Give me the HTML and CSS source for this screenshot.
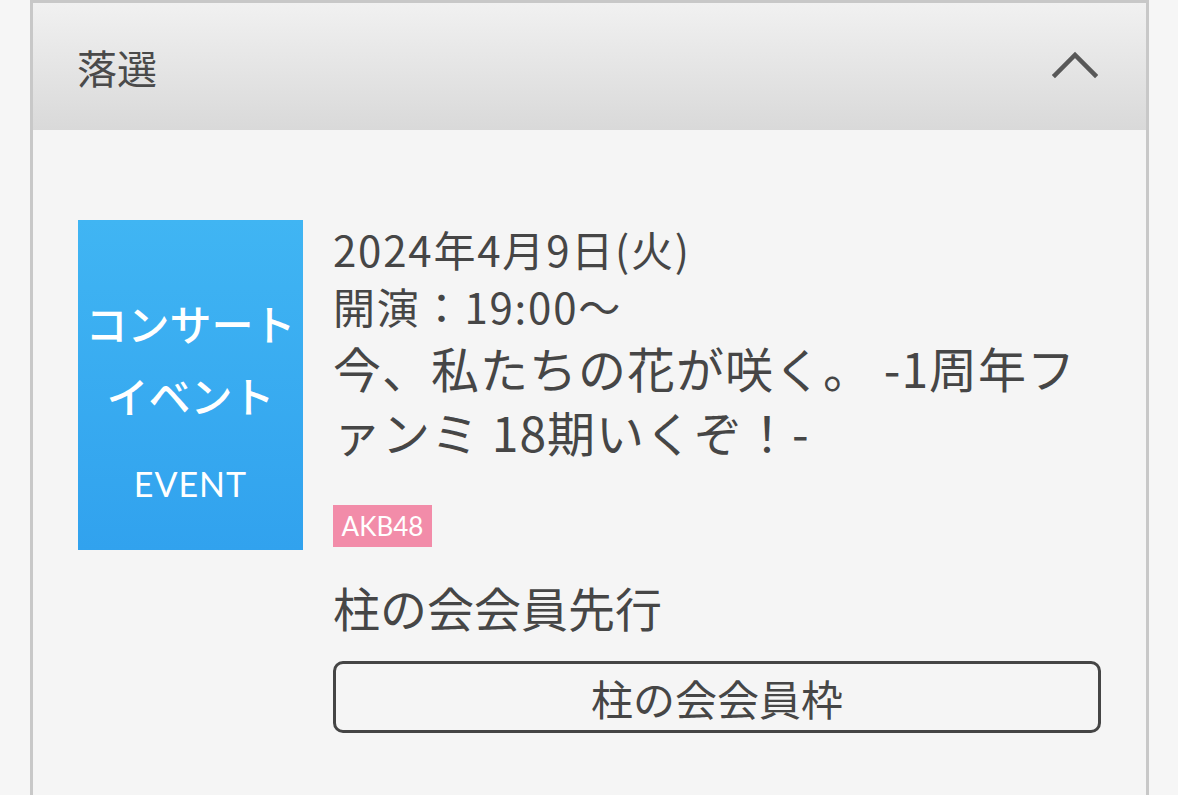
FILE: index.html
```html
<!DOCTYPE html>
<html lang="ja">
<head>
<meta charset="utf-8">
<link rel="stylesheet" href="styles.css">
</head>
<body>
<section class="panel">
  <header class="panel-head">
    <h2 class="panel-title">落選</h2>
    <svg class="chevron" width="46" height="30" viewBox="0 0 46 30"><polyline points="3,26 23,6 43,26" fill="none" stroke="#585858" stroke-width="4.5" stroke-linecap="square"/></svg>
  </header>
  <div class="panel-body">
    <div class="thumb">
      <div class="thumb-jp">コンサート<br>イベント</div>
      <div class="thumb-en">EVENT</div>
    </div>
    <div class="info">
      <p class="date">2024年4月9日(火)</p>
      <p class="time">開演：19:00～</p>
      <p class="title">今、私たちの花が咲く。 -1周年ファンミ 18期いくぞ！-</p>
      <span class="tag">AKB48</span>
      <p class="sale">柱の会会員先行</p>
      <div class="button">柱の会会員枠</div>
    </div>
  </div>
</section>
</body>
</html>
```
FILE: styles.css
```css
* { box-sizing: border-box; }
html, body {
  margin: 0;
  padding: 0;
  background: #f6f6f6;
  font-family: "Noto Sans CJK JP", "Noto Sans", sans-serif;
  color: #464646;
}
.panel {
  margin-left: 30px;
  width: 1119px;
  min-height: 795px;
  border: 3px solid #c8c8c8;
  border-bottom: none;
  background: #f5f5f5;
}
.panel-head {
  height: 127px;
  background: linear-gradient(#f1f1f1, #d9d9d9);
  display: flex;
  align-items: center;
  justify-content: space-between;
  padding: 0 48px 0 44px;
}
.panel-title {
  margin: 0;
  font-size: 40px;
  font-weight: 400;
  color: #4a4a4a;
  line-height: 1;
}
.chevron { display: block; margin-top: -6px; }
.panel-body {
  display: flex;
  gap: 30px;
  padding: 90px 45px 0 45px;
}
.thumb {
  flex: 0 0 225px;
  height: 330px;
  background: linear-gradient(#40b5f3, #31a2ee);
  color: #fff;
  display: flex;
  flex-direction: column;
  align-items: center;
  padding-top: 67px;
}
.thumb-jp {
  font-size: 42px;
  font-weight: 500;
  line-height: 72px;
  text-align: center;
}
.thumb-en {
  font-family: Lato, "Noto Sans", sans-serif;
  font-size: 34px;
  line-height: 1;
  margin-top: 36px;
  letter-spacing: 1px;
}
.info { flex: 1; min-width: 0; }
.info p { margin: 0; }
.date, .time {
  font-size: 42px;
  line-height: 57px;
  letter-spacing: 1.8px;
}
.title {
  font-size: 48px;
  line-height: 64px;
  letter-spacing: 1px;
  line-break: normal;
  margin-top: 1px !important;
}
.tag {
  display: inline-block;
  margin-top: 42px;
  width: 99px;
  height: 42px;
  background: #f28ca9;
  color: #fff;
  font-family: Lato, "Noto Sans", sans-serif;
  font-size: 26px;
  line-height: 42px;
  text-align: center;
  vertical-align: top;
}
.sale {
  font-size: 47px;
  line-height: 62px;
  margin-top: 29px !important;
}
.button {
  margin-top: 23px;
  height: 72px;
  border: 3px solid #454545;
  border-radius: 10px;
  display: flex;
  align-items: center;
  justify-content: center;
  font-size: 42px;
}
```
